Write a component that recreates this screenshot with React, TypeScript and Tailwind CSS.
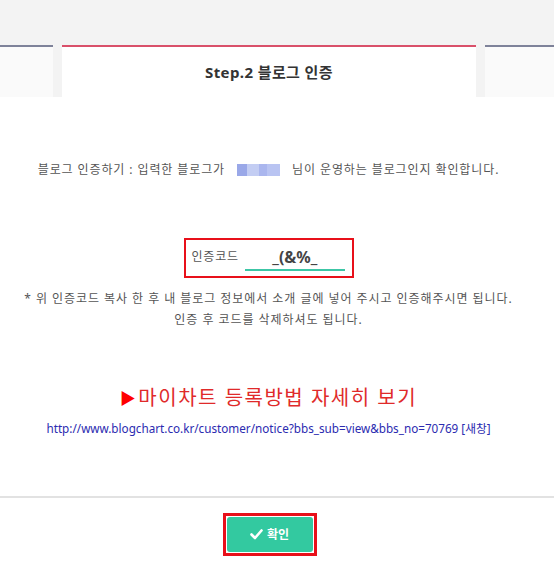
import React from 'react';

export default function App() {
  return (
    <div className="w-[554px] h-[577px] bg-white overflow-hidden font-['Noto_Sans','Noto_Sans_CJK_KR',sans-serif] text-[#555]">
      {/* tabs */}
      <div className="bg-[#f3f3f3] pt-[45px]">
        <div className="flex h-[52px] gap-[9px]">
          <div className="w-[53px] border-t-2 border-[#7e8299] bg-[#fafafa]" />
          <div className="flex-1 border-t-2 border-[#d9506a] bg-white flex items-center justify-center">
            <span className="text-[15px] font-bold text-[#333] tracking-[0.4px]">Step.2 블로그 인증</span>
          </div>
          <div className="w-[69px] border-t-2 border-[#7e8299] bg-[#fafafa]" />
        </div>
      </div>

      {/* body */}
      <div className="flex flex-col items-center pr-[17px]">
        <p className="mt-[64px] text-[12px] leading-[18px] flex items-center tracking-[0.9px]">
          <span>블로그 인증하기 : 입력한 블로그가</span>
          <span className="mx-[12px] inline-flex h-[12px] w-[43px]">
            <span className="w-[10px] bg-[#9aa8e8]" />
            <span className="w-[12px] bg-[#c3cdf3]" />
            <span className="w-[8px] bg-[#aab6ee]" />
            <span className="w-[13px] bg-[#b9c4f2]" />
          </span>
          <span>님이 운영하는 블로그인지 확인합니다.</span>
        </p>

        <div className="mt-[59px] border-2 border-[#e8101a] w-[170px] h-[40px] flex items-center pl-[6px]">
          <span className="text-[12px] text-[#555] mb-[2px] tracking-[0.8px]">인증코드</span>
          <div className="ml-[6px] w-[100px] h-[26px] border-b-2 border-[#3cc6a6] flex items-center justify-center">
            <span className="text-[16px] font-bold text-[#444] leading-none">_(&amp;%_</span>
          </div>
        </div>

        <p className="mt-[10px] text-[12px] leading-[21px] text-center tracking-[0.95px]">
          * 위 인증코드 복사 한 후 내 블로그 정보에서 소개 글에 넣어 주시고 인증해주시면 됩니다.
          <br />
          인증 후 코드를 삭제하셔도 됩니다.
        </p>

        <p className="mt-[55px] text-[20px] leading-[26px] text-[#e02a2a] flex items-center tracking-[1.5px]">
          <span className="text-[#ff0000] text-[16px] mr-[1px]">▶</span>
          마이차트 등록방법 자세히 보기
        </p>

        <a className="mt-[8px] text-[11.7px] leading-[18px] text-[#2b2bb0]">
          http://www.blogchart.co.kr/customer/notice?bbs_sub=view&amp;bbs_no=70769 [새창]
        </a>
      </div>

      <div className="mt-[59px] border-t-2 border-[#e2e2e2]" />

      <div className="flex justify-center mt-[15px] pr-[15px]">
        <div className="border-[3px] border-[#e8101a] p-[1px]">
          <button className="w-[86px] h-[35px] rounded-[3px] bg-[#33c9a0] text-white text-[12px] font-bold flex items-center justify-center gap-[4px]">
            <svg width="13" height="11" viewBox="0 0 13 11" fill="none">
              <path d="M1.5 5.5 L5 9 L11.5 1.5" stroke="white" strokeWidth="2.6" strokeLinecap="round" strokeLinejoin="round" />
            </svg>
            확인
          </button>
        </div>
      </div>
    </div>
  );
}
